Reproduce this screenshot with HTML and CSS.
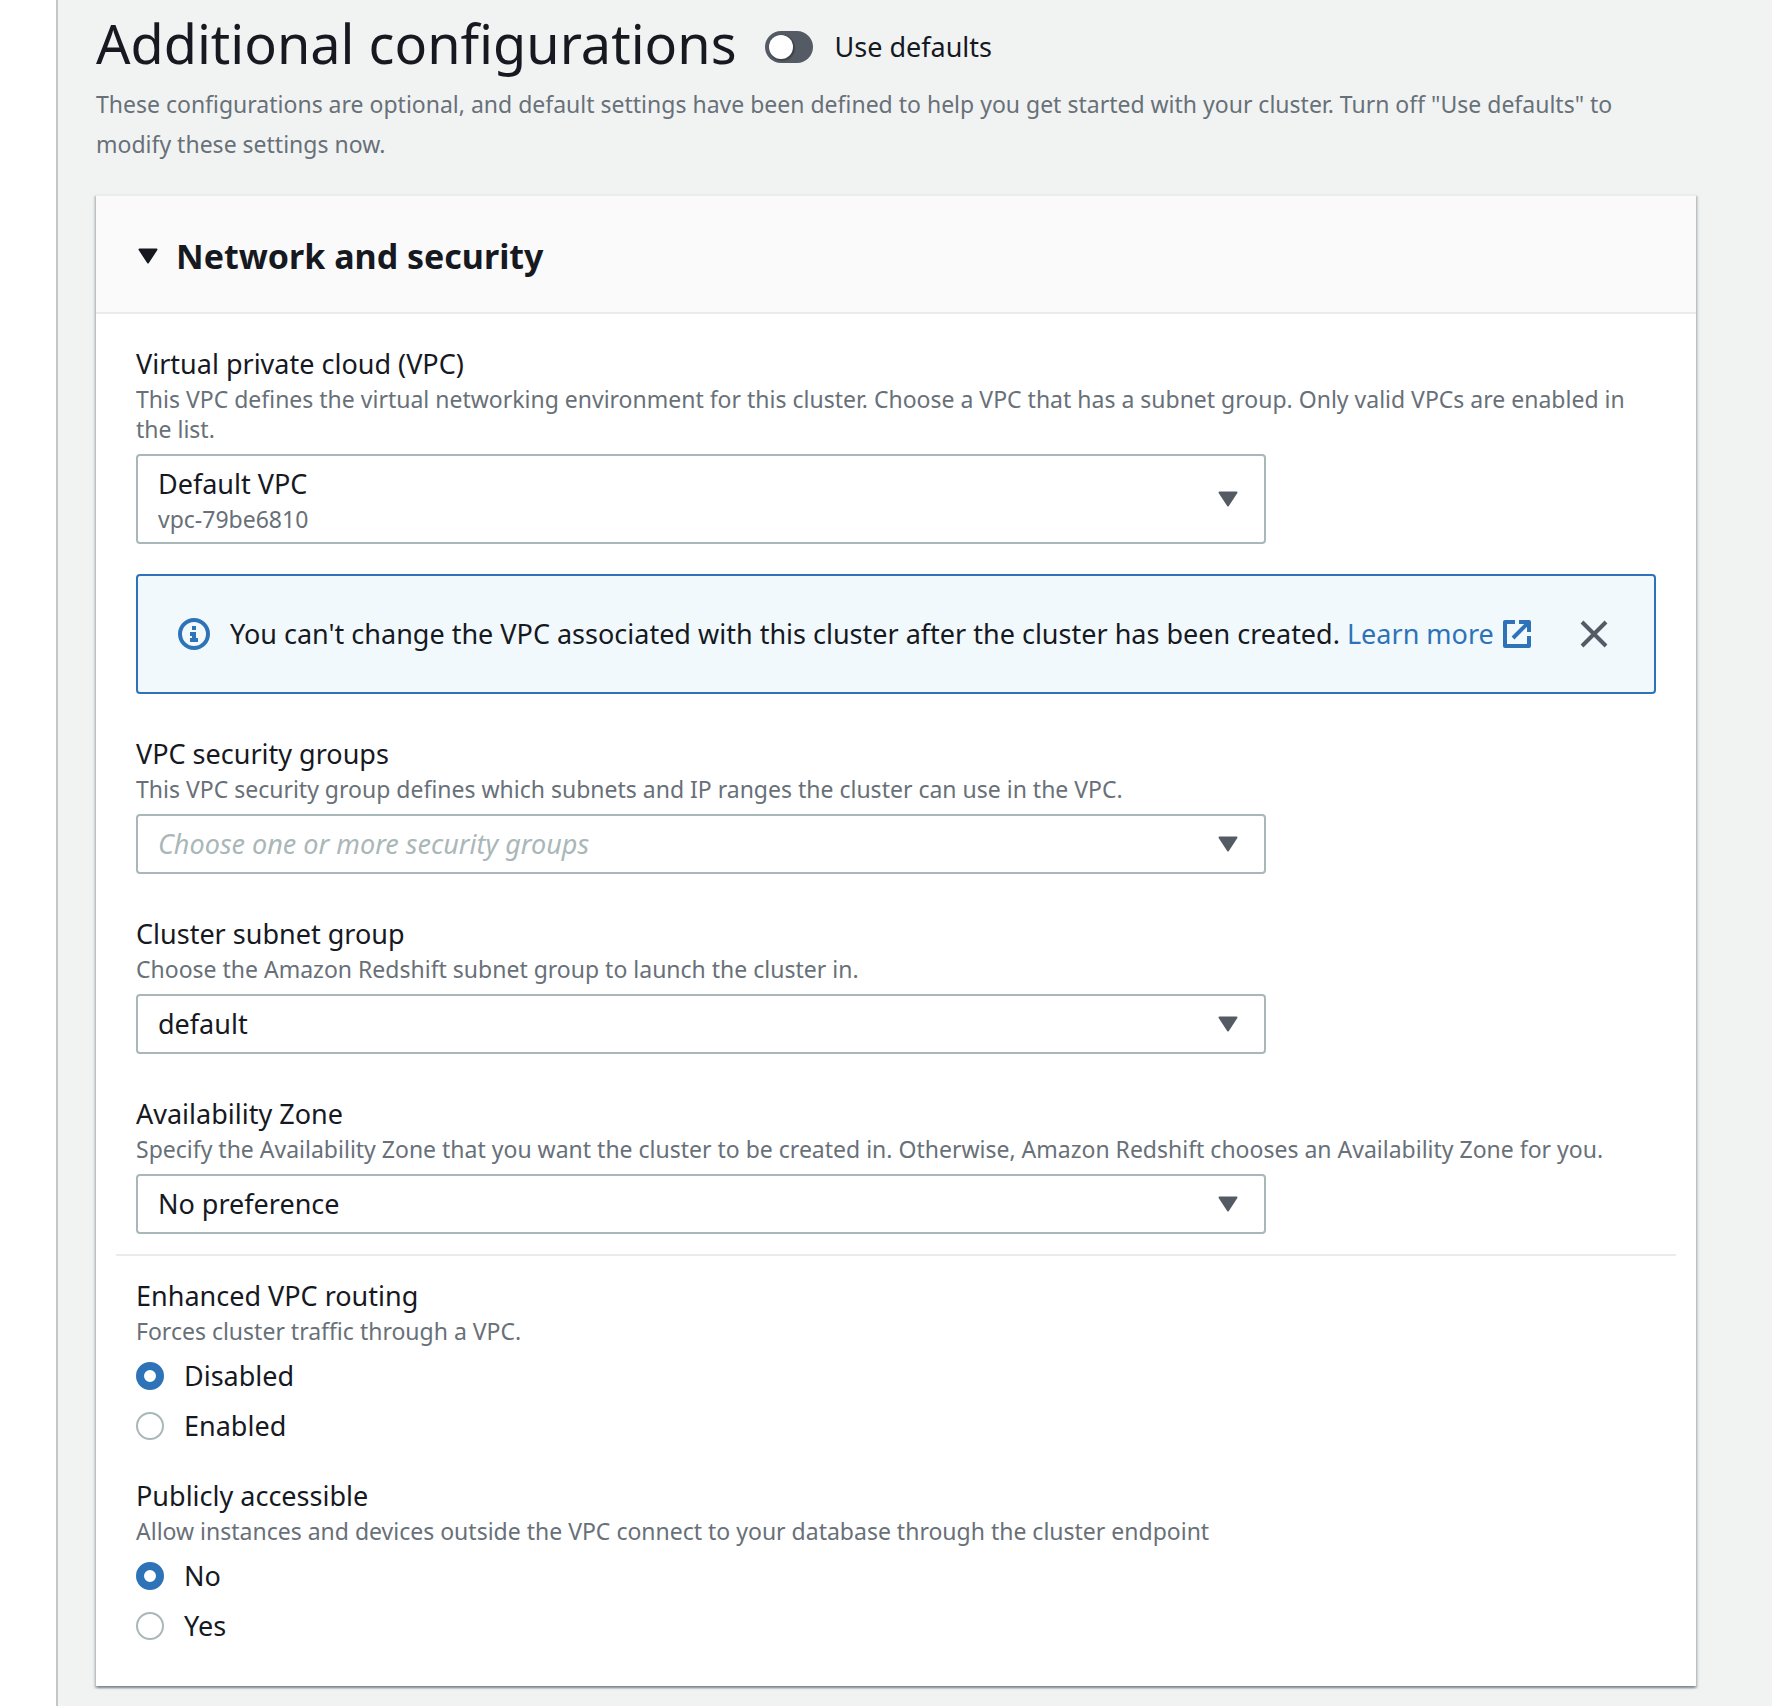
FILE: index.html
```html
<!DOCTYPE html>
<html lang="en">
<head>
<meta charset="utf-8">
<meta name="viewport" content="width=device-width, initial-scale=1">
<title>Create cluster - Additional configurations</title>
<link rel="stylesheet" href="styles.css">
</head>
<body>
<main class="page">
  <header class="page-header">
    <div class="title-row">
      <h1 class="title">Additional configurations</h1>
      <label class="toggle">
        <input class="toggle-input" type="checkbox" role="switch">
        <span>Use defaults</span>
      </label>
    </div>
    <p class="intro">These configurations are optional, and default settings have been defined to help you get started with your cluster. Turn off "Use defaults" to modify these settings now.</p>
  </header>

  <section class="card">
    <h2 class="card-header">
      <button class="card-toggle" type="button" aria-expanded="true" aria-controls="network">
        <svg class="caret" viewBox="0 0 20 16" aria-hidden="true"><path d="M1.5 1.5h17l-8.5 13z"/></svg>
        Network and security
      </button>
    </h2>

    <div class="card-body" id="network">
      <div class="field">
        <label class="label" for="vpc">Virtual private cloud (VPC)</label>
        <p class="hint">This VPC defines the virtual networking environment for this cluster. Choose a VPC that has a subnet group. Only valid VPCs are enabled in the list.</p>
        <div class="columns">
          <div class="picker picker-tall">
            <select class="select" id="vpc" aria-describedby="vpc-id"><option>Default VPC</option></select>
            <span class="picker-detail" id="vpc-id">vpc-79be6810</span>
            <svg class="caret picker-caret" viewBox="0 0 20 16" aria-hidden="true"><path d="M1.5 1.5h17l-8.5 13z"/></svg>
          </div>
        </div>
      </div>

      <div class="alert" role="status">
        <svg class="alert-icon" viewBox="0 0 32 32" aria-hidden="true">
          <circle cx="16" cy="16" r="14" fill="none" stroke="currentColor" stroke-width="4"/>
          <path fill="currentColor" d="M14 8h4v4h-4zM12 14h6v6h2v4h-8v-4h2v-2h-2z"/>
        </svg>
        <p class="alert-text">You can't change the VPC associated with this cluster after the cluster has been created. <a class="link" href="#learn-more">Learn more <svg class="external" viewBox="0 0 28 28" aria-hidden="true"><path d="M12 2H2v24h24V16M16 2h10v10M26 2L10 18" fill="none" stroke="currentColor" stroke-width="4" stroke-linejoin="round"/></svg></a></p>
        <button class="dismiss" type="button" aria-label="Dismiss">
          <svg class="dismiss-icon" viewBox="0 0 28 28" aria-hidden="true"><path d="M2 2l24 24M26 2L2 26" fill="none" stroke="currentColor" stroke-width="4"/></svg>
        </button>
      </div>

      <div class="field">
        <label class="label" for="groups">VPC security groups</label>
        <p class="hint">This VPC security group defines which subnets and IP ranges the cluster can use in the VPC.</p>
        <div class="columns">
          <div class="picker">
            <select class="select select-empty" id="groups"><option>Choose one or more security groups</option></select>
            <svg class="caret picker-caret" viewBox="0 0 20 16" aria-hidden="true"><path d="M1.5 1.5h17l-8.5 13z"/></svg>
          </div>
        </div>
      </div>

      <div class="field">
        <label class="label" for="subnet">Cluster subnet group</label>
        <p class="hint">Choose the Amazon Redshift subnet group to launch the cluster in.</p>
        <div class="columns">
          <div class="picker">
            <select class="select" id="subnet"><option>default</option></select>
            <svg class="caret picker-caret" viewBox="0 0 20 16" aria-hidden="true"><path d="M1.5 1.5h17l-8.5 13z"/></svg>
          </div>
        </div>
      </div>

      <div class="field">
        <label class="label" for="zone">Availability Zone</label>
        <p class="hint">Specify the Availability Zone that you want the cluster to be created in. Otherwise, Amazon Redshift chooses an Availability Zone for you.</p>
        <div class="columns">
          <div class="picker">
            <select class="select" id="zone"><option>No preference</option></select>
            <svg class="caret picker-caret" viewBox="0 0 20 16" aria-hidden="true"><path d="M1.5 1.5h17l-8.5 13z"/></svg>
          </div>
        </div>
      </div>

      <hr class="divider">

      <fieldset class="choices">
        <legend class="label">Enhanced VPC routing</legend>
        <p class="hint">Forces cluster traffic through a VPC.</p>
        <label class="choice"><input class="radio" type="radio" name="routing" checked>Disabled</label>
        <label class="choice"><input class="radio" type="radio" name="routing">Enabled</label>
      </fieldset>

      <fieldset class="choices">
        <legend class="label">Publicly accessible</legend>
        <p class="hint">Allow instances and devices outside the VPC connect to your database through the cluster endpoint</p>
        <label class="choice"><input class="radio" type="radio" name="public" checked>No</label>
        <label class="choice"><input class="radio" type="radio" name="public">Yes</label>
      </fieldset>
    </div>
  </section>
</main>
</body>
</html>
```
FILE: styles.css
```css
:root {
  --ink: #16191f;
  --muted: #687078;
  --icon: #545b64;
  --line: #eaebeb;
  --control: #aab7b8;
  --blue: #2e73b8;
}

* {
  box-sizing: border-box;
}

body {
  margin: 0;
  background: #fff;
  color: var(--ink);
  font: 27px/40px "Noto Sans", "Open Sans", sans-serif;
}

h1, h2, p {
  margin: 0;
}

.page {
  min-height: 100vh;
  margin-left: 56px;
  padding: 10px 76px 20px 38px;
  border-left: 2px solid #c3c7c9;
  background: #f1f3f3;
}

.title-row {
  display: flex;
  align-items: center;
  gap: 28px;
}

.title {
  padding-bottom: 8px;
  font-size: 54px;
  line-height: 66px;
  font-weight: 400;
}

.toggle {
  display: flex;
  align-items: center;
  gap: 22px;
}

.toggle-input {
  appearance: none;
  width: 48px;
  height: 32px;
  margin: 0;
  padding: 4px;
  border-radius: 16px;
  background: var(--icon);
}

.toggle-input::before {
  content: "";
  display: block;
  width: 24px;
  height: 24px;
  border-radius: 50%;
  background: #fff;
  box-shadow: 1px 1px 1px 1px rgba(0, 0, 0, 0.25);
}

.toggle-input:checked::before {
  margin-left: 16px;
}

.intro {
  padding-right: 40px;
  color: var(--muted);
  font-size: 23px;
}

.card {
  margin-top: 30px;
  border-top: 2px solid var(--line);
  background: #fff;
  box-shadow: 0 2px 2px rgba(0, 28, 36, 0.3), 2px 2px 2px rgba(0, 28, 36, 0.15), -2px 2px 2px rgba(0, 28, 36, 0.15);
}

.card-header {
  padding: 38px 40px 34px;
  border-bottom: 2px solid var(--line);
  background: #fafafa;
}

.card-toggle {
  display: flex;
  align-items: center;
  gap: 18px;
  padding: 0 2px;
  border: 0;
  background: none;
  color: inherit;
  font: bold 34px/44px "Noto Sans", "Open Sans", sans-serif;
}

.caret {
  width: 20px;
  height: 16px;
  fill: currentColor;
  stroke: currentColor;
  stroke-width: 2px;
  stroke-linejoin: round;
}

.card-body {
  padding: 30px 40px 40px;
}

.field {
  margin-bottom: 40px;
}

.label {
  display: block;
  padding: 0;
  line-height: 40px;
}

.hint {
  color: var(--muted);
  font-size: 23px;
  line-height: 30px;
}

.columns {
  display: grid;
  grid-template-columns: repeat(4, 1fr);
  gap: 40px;
  margin-top: 10px;
}

.picker {
  display: grid;
  grid-column: span 3;
  align-items: center;
  height: 60px;
}

.picker-tall {
  height: 90px;
}

.select,
.picker-detail,
.picker-caret {
  grid-area: 1 / 1;
}

.select {
  appearance: none;
  width: 100%;
  height: 100%;
  padding: 0 70px 0 20px;
  border: 2px solid var(--control);
  border-radius: 4px;
  background: #fff;
  color: inherit;
  font: inherit;
}

.select-empty {
  color: var(--control);
  font-style: italic;
}

.picker-tall .select {
  padding-bottom: 30px;
}

.picker-detail {
  align-self: end;
  padding: 0 22px 10px;
  color: var(--muted);
  font-size: 23px;
  line-height: 30px;
  pointer-events: none;
}

.picker-caret {
  justify-self: end;
  margin-right: 28px;
  color: var(--icon);
  pointer-events: none;
}

.alert {
  display: flex;
  align-items: center;
  margin: 30px 0 40px;
  padding: 38px 40px;
  border: 2px solid var(--blue);
  border-radius: 4px;
  background: #f1f9fd;
}

.field:has(+ .alert) {
  margin-bottom: 0;
}

.alert-icon {
  flex: none;
  width: 32px;
  height: 32px;
  margin-right: 20px;
  color: var(--blue);
}

.alert-text {
  flex: 1;
}

.link {
  color: var(--blue);
  text-decoration: none;
}

.external {
  width: 28px;
  height: 28px;
  margin-left: 2px;
  vertical-align: -4px;
}

.dismiss {
  display: flex;
  padding: 6px;
  border: 0;
  background: none;
  color: var(--icon);
}

.dismiss-icon {
  width: 28px;
  height: 28px;
}

.divider {
  height: 2px;
  margin: -20px -20px 20px;
  border: 0;
  background: var(--line);
}

.choices {
  display: flex;
  flex-direction: column;
  min-width: 0;
  margin: 0 0 30px;
  padding: 0;
  border: 0;
}

.choices:last-child {
  margin-bottom: 0;
}

.choice {
  display: flex;
  align-items: center;
  gap: 20px;
  margin-top: 10px;
}

.radio {
  appearance: none;
  width: 28px;
  height: 28px;
  margin: 0;
  border: 2px solid var(--control);
  border-radius: 50%;
  background: #fff;
}

.radio:checked {
  border: 8px solid var(--blue);
}
```
